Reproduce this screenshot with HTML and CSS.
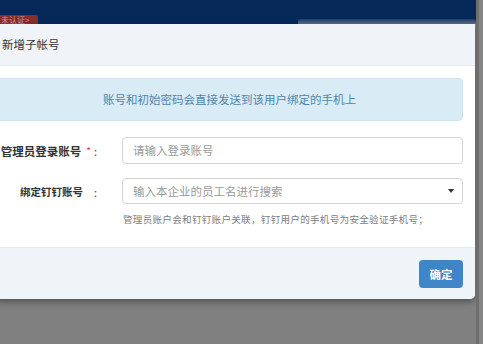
FILE: index.html
```html
<!DOCTYPE html>
<html lang="zh-CN">
<head>
<meta charset="utf-8">
<link rel="stylesheet" href="styles.css">
</head>
<body>
<div class="screen">
  <div class="main">
    <div class="topbar">
      <span class="badge">未认证&gt;</span>
      <span class="blur"></span>
    </div>
    <div class="modal">
      <div class="modal-header">新增子帐号</div>
      <div class="modal-body">
        <div class="alert">账号和初始密码会直接发送到该用户绑定的手机上</div>
        <div class="form-row">
          <label class="label">管理员登录账号<span class="req">*</span><span class="colon">:</span></label>
          <div class="control">
            <div class="input placeholder">请输入登录账号</div>
          </div>
        </div>
        <div class="form-row second">
          <label class="label small">绑定钉钉账号<span class="gap"></span><span class="colon">:</span></label>
          <div class="control">
            <div class="input select placeholder">输入本企业的员工名进行搜索<span class="caret"></span></div>
            <div class="help">管理员账户会和钉钉账户关联，钉钉用户的手机号为安全验证手机号；</div>
          </div>
        </div>
      </div>
      <div class="modal-footer">
        <button class="btn">确定</button>
      </div>
    </div>
  </div>
  <div class="strip"></div>
</div>
</body>
</html>
```

FILE: styles.css
```css
* { box-sizing: border-box; }
html, body { margin: 0; padding: 0; }
body {
  width: 483px;
  height: 344px;
  overflow: hidden;
  background: #808080;
  font-family: "Noto Sans CJK SC", "Noto Sans", sans-serif;
}
.screen {
  display: grid;
  grid-template-columns: 476px 7px;
  height: 344px;
}
.main {
  display: flex;
  flex-direction: column;
}
.strip {
  background: linear-gradient(to right, #6e6e6e 0, #6e6e6e 3px, #858585 3px);
}
.topbar {
  height: 24px;
  background: #062859;
  display: flex;
  align-items: flex-end;
  justify-content: space-between;
}
.badge {
  width: 38px;
  height: 9px;
  background: #8a2a2a;
  color: #c99;
  font-size: 8px;
  line-height: 10px;
  overflow: hidden;
  padding-left: 1px;
  border-top-right-radius: 2px;
}
.blur {
  width: 178px;
  height: 5px;
  background: linear-gradient(to bottom, #1b3b66, #5d6f84);
  border-radius: 2px 2px 0 0;
}
.modal {
  width: 479px;
  margin-left: -4px;
  padding-left: 4px;
  background: #fff;
  border-radius: 0 0 5px 0;
  box-shadow: 0 3px 6px rgba(0,0,0,0.35);
  overflow: hidden;
}
.modal-header {
  height: 42px;
  background: #f0f4f9;
  border-bottom: 1px solid #e6eaee;
  color: #333;
  font-size: 11.5px;
  line-height: 41px;
  margin-left: -4px;
  padding-left: 6px;
}
.modal-body {
  padding: 12px 12px 0 0;
}
.alert {
  height: 43px;
  background: #d9ecf6;
  border: 1px solid #cfe6f2;
  border-radius: 4px;
  color: #4f85aa;
  font-size: 11.5px;
  line-height: 41px;
  text-align: center;
  margin-left: -4px;
}
.form-row {
  display: flex;
  margin-top: 16px;
}
.form-row.second { margin-top: 14px; }
.label {
  width: 122px;
  flex: none;
  padding-right: 25px;
  display: flex;
  justify-content: flex-end;
  align-items: center;
  height: 27px;
  font-size: 11.5px;
  font-weight: bold;
  color: #333;
}
.label.small { font-size: 10.5px; }
.req {
  color: #e0353b;
  font-weight: normal;
  margin-left: 5px;
  font-size: 10px;
}
.gap { width: 8px; }
.colon {
  font-weight: normal;
  margin-left: 3px;
  color: #444;
  font-size: 11px;
}
.control {
  flex: 1;
}
.input {
  height: 27px;
  border: 1px solid #d3d3d3;
  border-radius: 4px;
  font-size: 11.5px;
  line-height: 25px;
  padding-left: 10px;
  color: #999;
  position: relative;
}
.select { height: 26px; line-height: 24px; }
.caret {
  position: absolute;
  right: 8px;
  top: 10px;
  width: 0;
  height: 0;
  border-left: 3.5px solid transparent;
  border-right: 3.5px solid transparent;
  border-top: 4px solid #333;
}
.help {
  margin-top: 9px;
  padding-left: 1px;
  font-size: 9.6px;
  letter-spacing: 0.25px;
  color: #808080;
  line-height: 12px;
}
.modal-footer {
  margin-top: 22px;
  height: 52px;
  background: #eff4f8;
  border-top: 1px solid #e6eaee;
  display: flex;
  justify-content: flex-end;
  align-items: flex-start;
  padding: 12px 12px 0 0;
  margin-left: -4px;
}
.btn {
  width: 44px;
  height: 28px;
  border: none;
  border-radius: 4px;
  background: #3f86c8;
  color: #fff;
  font-family: inherit;
  font-size: 11.5px;
  font-weight: bold;
  padding: 0;
}
```
